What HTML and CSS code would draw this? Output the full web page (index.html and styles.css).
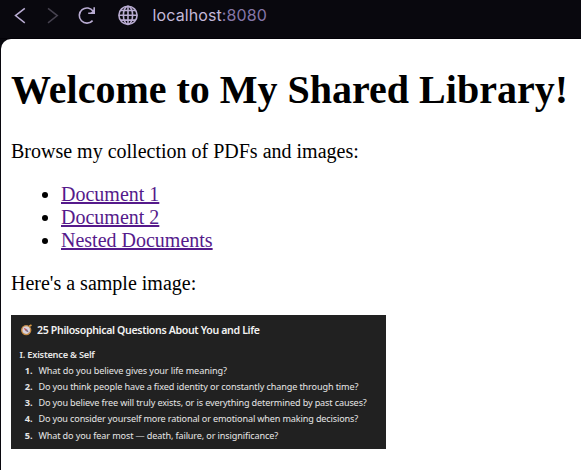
FILE: index.html
```html
<!DOCTYPE html>
<html lang="en">
<head>
<meta charset="utf-8">
<title>My Shared Library</title>
<link rel="stylesheet" href="styles.css">
</head>
<body>
<header class="toolbar">
  <svg class="nav-icons" width="152" height="38" viewBox="0 0 152 38" fill="none" stroke="#b9acd2" stroke-width="1.5">
    <path d="M24.8 8.3 15.5 15.6 24.8 22.9"/>
    <path class="disabled" d="M48 8.3 57.3 15.6 48 22.9"/>
    <path stroke-width="1.6" d="M93.2 11.3A7.6 7.6 0 1 0 92.6 20.6M94.2 7.3V13.2H88.2"/>
    <path stroke="none" fill="#b9acd2" d="M94.2 9.2V13.2H90.2Z"/>
    <g stroke-width="1.6">
      <circle cx="128" cy="15.3" r="9.1"/>
      <ellipse cx="128" cy="15.3" rx="4.6" ry="9.1"/>
      <path d="M128 6.2V24.4M119 15.3H137M120.8 10.5H135.2M120.8 20.1H135.2"/>
    </g>
  </svg>
  <div class="address">localhost<span class="port">:8080</span></div>
</header>
<main class="page">
  <h1>Welcome to My Shared Library!</h1>
  <p>Browse my collection of PDFs and images:</p>
  <ul>
    <li><a href="#">Document 1</a></li>
    <li><a href="#">Document 2</a></li>
    <li><a href="#">Nested Documents</a></li>
  </ul>
  <p>Here's a sample image:</p>
  <svg class="sample" width="375" height="134" viewBox="0 0 375 134">
    <rect width="375" height="134" fill="#212121"/>
    <circle cx="15.2" cy="15.1" r="4.5" fill="#d8d2dc" stroke="#c48a45" stroke-width="1.4"/>
    <path d="M18.2 11.2 20.5 10" stroke="#d99a45" stroke-width="1.8"/>
    <path d="M12.6 12.8 16 14.2 14.5 16Z" fill="#c0525c"/>
    <path d="M17.8 17.6 16 14.2 14.5 16Z" fill="#70657d"/>
    <text class="title" x="26" y="18.7" textLength="223">25 Philosophical Questions About You and Life</text>
    <text class="section" x="8.6" y="43" textLength="75.2">I. Existence &amp; Self</text>
    <g class="number">
      <text x="13.8" y="58.6">1.</text>
      <text x="13.8" y="74.8">2.</text>
      <text x="13.8" y="91.1">3.</text>
      <text x="13.8" y="107.4">4.</text>
      <text x="13.8" y="123.7">5.</text>
    </g>
    <g class="question">
      <text x="27.4" y="58.6" textLength="188.5">What do you believe gives your life meaning?</text>
      <text x="27.4" y="74.8" textLength="320">Do you think people have a fixed identity or constantly change through time?</text>
      <text x="27.4" y="91.1" textLength="328.4">Do you believe free will truly exists, or is everything determined by past causes?</text>
      <text x="27.4" y="107.4" textLength="319.8">Do you consider yourself more rational or emotional when making decisions?</text>
      <text x="27.4" y="123.7" textLength="239.8">What do you fear most — death, failure, or insignificance?</text>
    </g>
  </svg>
</main>
</body>
</html>
```
FILE: styles.css
```css
body {
  margin: 0;
  background: #09080e;
  height: 470px;
  overflow: hidden;
}

.toolbar {
  display: flex;
  height: 38px;
  border-bottom: 1px solid #030107;
}

.nav-icons {
  flex: none;
}

.address {
  padding-left: 0.6px;
  font: 16px/31px Inter, sans-serif;
  letter-spacing: 0.1px;
  color: #c3b9da;
}

.disabled {
  stroke: #46424f;
}

.port {
  color: #8576a8;
}

.page {
  display: flow-root;
  box-sizing: border-box;
  height: 431px;
  margin-left: 1px;
  padding: 0 10px;
  border-top-left-radius: 10px;
  background: #fff;
  color: #000;
  font: 20px/23px "Liberation Serif", serif;
}

h1 {
  margin: 28px 0 27px;
  font-size: 40px;
  line-height: 46px;
  white-space: nowrap;
}

p,
ul {
  margin: 20px 0;
}

ul {
  padding-left: 50px;
}

a {
  color: #551a8b;
  text-decoration-thickness: 2px;
  text-underline-offset: 1px;
}

.sample {
  display: block;
}

.sample text {
  font-family: "Noto Sans", sans-serif;
  fill: #e6e6e6;
}

.sample .title {
  font-size: 10.6px;
  font-weight: 600;
  fill: #f2f2f2;
}

.sample .section {
  font-size: 9.3px;
  font-weight: 600;
}

.number text {
  font-size: 9.2px;
  font-weight: 700;
}

.question text {
  font-size: 9.1px;
}
```
